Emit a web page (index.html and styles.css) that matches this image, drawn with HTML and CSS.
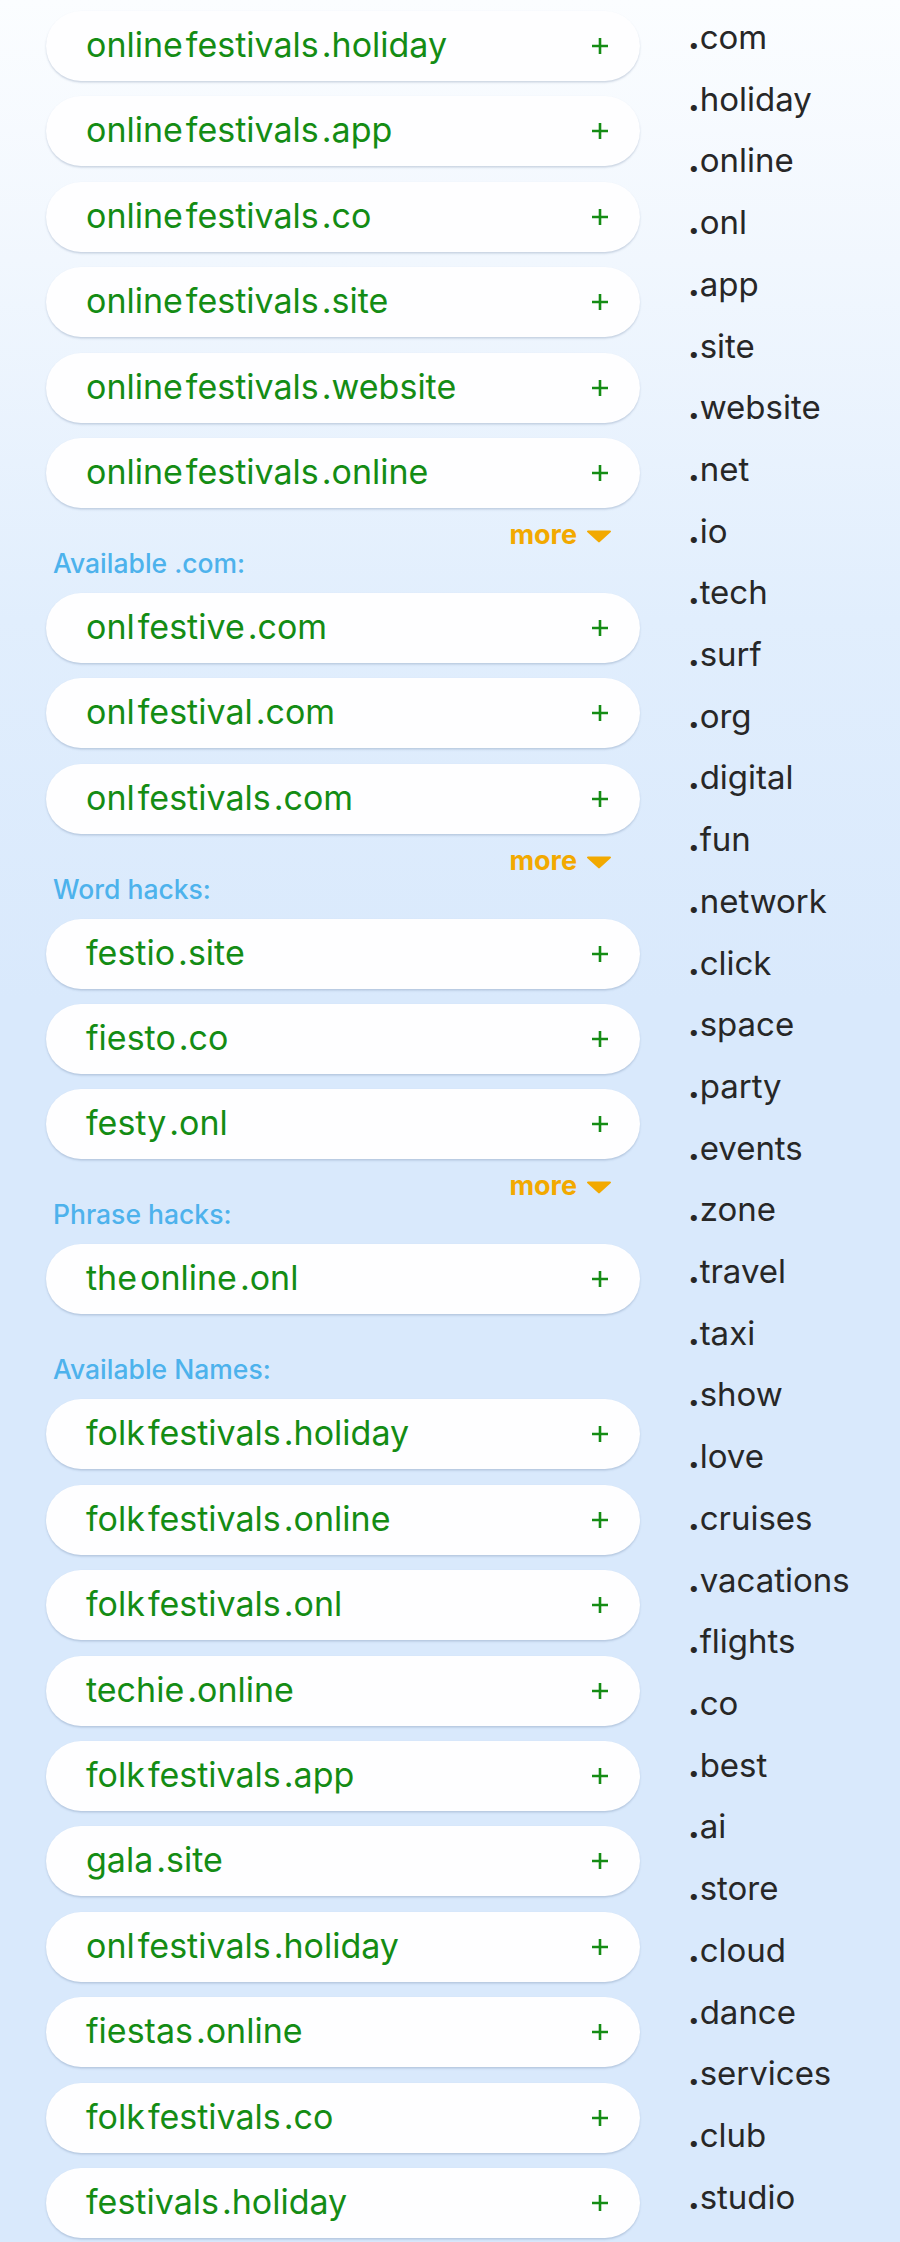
FILE: index.html
```html
<!DOCTYPE html>
<html lang="en">
<head>
<meta charset="utf-8">
<title>Domain suggestions</title>
<link rel="stylesheet" href="styles.css">
</head>
<body>
<div class="page">
  <div class="results">
    <div class="group">
      <div class="pill"><span class="name"><span>online</span><span>festivals</span><span>.holiday</span></span><svg class="plus" viewBox="0 0 18 18"><path d="M9 1v16M1 9h16"/></svg></div>
      <div class="pill"><span class="name"><span>online</span><span>festivals</span><span>.app</span></span><svg class="plus" viewBox="0 0 18 18"><path d="M9 1v16M1 9h16"/></svg></div>
      <div class="pill"><span class="name"><span>online</span><span>festivals</span><span>.co</span></span><svg class="plus" viewBox="0 0 18 18"><path d="M9 1v16M1 9h16"/></svg></div>
      <div class="pill"><span class="name"><span>online</span><span>festivals</span><span>.site</span></span><svg class="plus" viewBox="0 0 18 18"><path d="M9 1v16M1 9h16"/></svg></div>
      <div class="pill"><span class="name"><span>online</span><span>festivals</span><span>.website</span></span><svg class="plus" viewBox="0 0 18 18"><path d="M9 1v16M1 9h16"/></svg></div>
      <div class="pill"><span class="name"><span>online</span><span>festivals</span><span>.online</span></span><svg class="plus" viewBox="0 0 18 18"><path d="M9 1v16M1 9h16"/></svg></div>
    </div>

    <div class="group-head">
      <div class="more">more <svg class="caret" viewBox="0 0 26 14"><path d="M2 1.5h22a1 1 0 0 1 .8 1.6l-11 10a1.2 1.2 0 0 1-1.6 0l-11-10A1 1 0 0 1 2 1.5z"/></svg></div>
      <h3 class="head">Available .com:</h3>
    </div>
    <div class="group">
      <div class="pill"><span class="name"><span>onl</span><span>festive</span><span>.com</span></span><svg class="plus" viewBox="0 0 18 18"><path d="M9 1v16M1 9h16"/></svg></div>
      <div class="pill"><span class="name"><span>onl</span><span>festival</span><span>.com</span></span><svg class="plus" viewBox="0 0 18 18"><path d="M9 1v16M1 9h16"/></svg></div>
      <div class="pill"><span class="name"><span>onl</span><span>festivals</span><span>.com</span></span><svg class="plus" viewBox="0 0 18 18"><path d="M9 1v16M1 9h16"/></svg></div>
    </div>

    <div class="group-head">
      <div class="more">more <svg class="caret" viewBox="0 0 26 14"><path d="M2 1.5h22a1 1 0 0 1 .8 1.6l-11 10a1.2 1.2 0 0 1-1.6 0l-11-10A1 1 0 0 1 2 1.5z"/></svg></div>
      <h3 class="head">Word hacks:</h3>
    </div>
    <div class="group">
      <div class="pill"><span class="name"><span>festio</span><span>.site</span></span><svg class="plus" viewBox="0 0 18 18"><path d="M9 1v16M1 9h16"/></svg></div>
      <div class="pill"><span class="name"><span>fiesto</span><span>.co</span></span><svg class="plus" viewBox="0 0 18 18"><path d="M9 1v16M1 9h16"/></svg></div>
      <div class="pill"><span class="name"><span>festy</span><span>.onl</span></span><svg class="plus" viewBox="0 0 18 18"><path d="M9 1v16M1 9h16"/></svg></div>
    </div>

    <div class="group-head">
      <div class="more">more <svg class="caret" viewBox="0 0 26 14"><path d="M2 1.5h22a1 1 0 0 1 .8 1.6l-11 10a1.2 1.2 0 0 1-1.6 0l-11-10A1 1 0 0 1 2 1.5z"/></svg></div>
      <h3 class="head">Phrase hacks:</h3>
    </div>
    <div class="group">
      <div class="pill"><span class="name"><span>the</span><span>online</span><span>.onl</span></span><svg class="plus" viewBox="0 0 18 18"><path d="M9 1v16M1 9h16"/></svg></div>
    </div>

    <div class="group-head">
      <h3 class="head">Available Names:</h3>
    </div>
    <div class="group">
      <div class="pill"><span class="name"><span>folk</span><span>festivals</span><span>.holiday</span></span><svg class="plus" viewBox="0 0 18 18"><path d="M9 1v16M1 9h16"/></svg></div>
      <div class="pill"><span class="name"><span>folk</span><span>festivals</span><span>.online</span></span><svg class="plus" viewBox="0 0 18 18"><path d="M9 1v16M1 9h16"/></svg></div>
      <div class="pill"><span class="name"><span>folk</span><span>festivals</span><span>.onl</span></span><svg class="plus" viewBox="0 0 18 18"><path d="M9 1v16M1 9h16"/></svg></div>
      <div class="pill"><span class="name"><span>techie</span><span>.online</span></span><svg class="plus" viewBox="0 0 18 18"><path d="M9 1v16M1 9h16"/></svg></div>
      <div class="pill"><span class="name"><span>folk</span><span>festivals</span><span>.app</span></span><svg class="plus" viewBox="0 0 18 18"><path d="M9 1v16M1 9h16"/></svg></div>
      <div class="pill"><span class="name"><span>gala</span><span>.site</span></span><svg class="plus" viewBox="0 0 18 18"><path d="M9 1v16M1 9h16"/></svg></div>
      <div class="pill"><span class="name"><span>onl</span><span>festivals</span><span>.holiday</span></span><svg class="plus" viewBox="0 0 18 18"><path d="M9 1v16M1 9h16"/></svg></div>
      <div class="pill"><span class="name"><span>fiestas</span><span>.online</span></span><svg class="plus" viewBox="0 0 18 18"><path d="M9 1v16M1 9h16"/></svg></div>
      <div class="pill"><span class="name"><span>folk</span><span>festivals</span><span>.co</span></span><svg class="plus" viewBox="0 0 18 18"><path d="M9 1v16M1 9h16"/></svg></div>
      <div class="pill"><span class="name"><span>festivals</span><span>.holiday</span></span><svg class="plus" viewBox="0 0 18 18"><path d="M9 1v16M1 9h16"/></svg></div>
    </div>
  </div>

  <ul class="tlds">
    <li><b>.</b>com</li>
    <li><b>.</b>holiday</li>
    <li><b>.</b>online</li>
    <li><b>.</b>onl</li>
    <li><b>.</b>app</li>
    <li><b>.</b>site</li>
    <li><b>.</b>website</li>
    <li><b>.</b>net</li>
    <li><b>.</b>io</li>
    <li><b>.</b>tech</li>
    <li><b>.</b>surf</li>
    <li><b>.</b>org</li>
    <li><b>.</b>digital</li>
    <li><b>.</b>fun</li>
    <li><b>.</b>network</li>
    <li><b>.</b>click</li>
    <li><b>.</b>space</li>
    <li><b>.</b>party</li>
    <li><b>.</b>events</li>
    <li><b>.</b>zone</li>
    <li><b>.</b>travel</li>
    <li><b>.</b>taxi</li>
    <li><b>.</b>show</li>
    <li><b>.</b>love</li>
    <li><b>.</b>cruises</li>
    <li><b>.</b>vacations</li>
    <li><b>.</b>flights</li>
    <li><b>.</b>co</li>
    <li><b>.</b>best</li>
    <li><b>.</b>ai</li>
    <li><b>.</b>store</li>
    <li><b>.</b>cloud</li>
    <li><b>.</b>dance</li>
    <li><b>.</b>services</li>
    <li><b>.</b>club</li>
    <li><b>.</b>studio</li>
  </ul>
</div>
</body>
</html>
```

FILE: styles.css
```css
html {
  background: linear-gradient(180deg, #fbfdff 0px, #f1f7fe 260px, #e1eefd 620px, #d9e9fc 1000px, #d9e9fc 100%);
  min-height: 100%;
}

body {
  margin: 0;
  font-family: Inter, "Noto Sans", "Liberation Sans", sans-serif;
  min-height: 2242px;
}

.page {
  display: grid;
  grid-template-columns: 594px 1fr;
  column-gap: 48px;
  padding-left: 46px;
}

.results {
  padding-top: 11px;
}

.group {
  display: flex;
  flex-direction: column;
  gap: 15.4px;
  margin-bottom: 15.4px;
}

.pill {
  height: 70px;
  box-sizing: border-box;
  border-radius: 35px;
  background: #fefeff;
  box-shadow: 0 1.5px 2px rgba(70, 100, 140, 0.25);
  display: flex;
  align-items: center;
  justify-content: space-between;
  padding: 0 31px 0 40px;
}

.name {
  display: flex;
  gap: 3px;
  color: #148c14;
  font-size: 34px;
  line-height: 1;
  padding-bottom: 2px;
}

.plus {
  width: 18px;
  height: 18px;
  stroke: #148c14;
  stroke-width: 2.6;
  fill: none;
}

.group-head {
  height: 69.6px;
  display: flex;
  flex-direction: column;
  justify-content: flex-end;
}

.more {
  align-self: flex-end;
  margin-right: 28px;
  display: flex;
  align-items: center;
  gap: 9px;
  color: #f2a900;
  font-weight: 700;
  font-size: 27px;
  line-height: 26px;
}

.caret {
  width: 26px;
  height: 14px;
  fill: #f2a900;
  margin-top: 2px;
}

.head {
  margin: 0 0 15px 7px;
  color: #4db2ec;
  font-weight: 500;
  font-size: 26.5px;
  line-height: 30px;
}

.tlds {
  list-style: none;
  margin: 0;
  padding: 7px 0 0 0;
}

.tlds li {
  font-size: 33px;
  line-height: 61.7px;
  color: #272727;
  white-space: nowrap;
}

.tlds b {
  font-weight: 800;
}
```
